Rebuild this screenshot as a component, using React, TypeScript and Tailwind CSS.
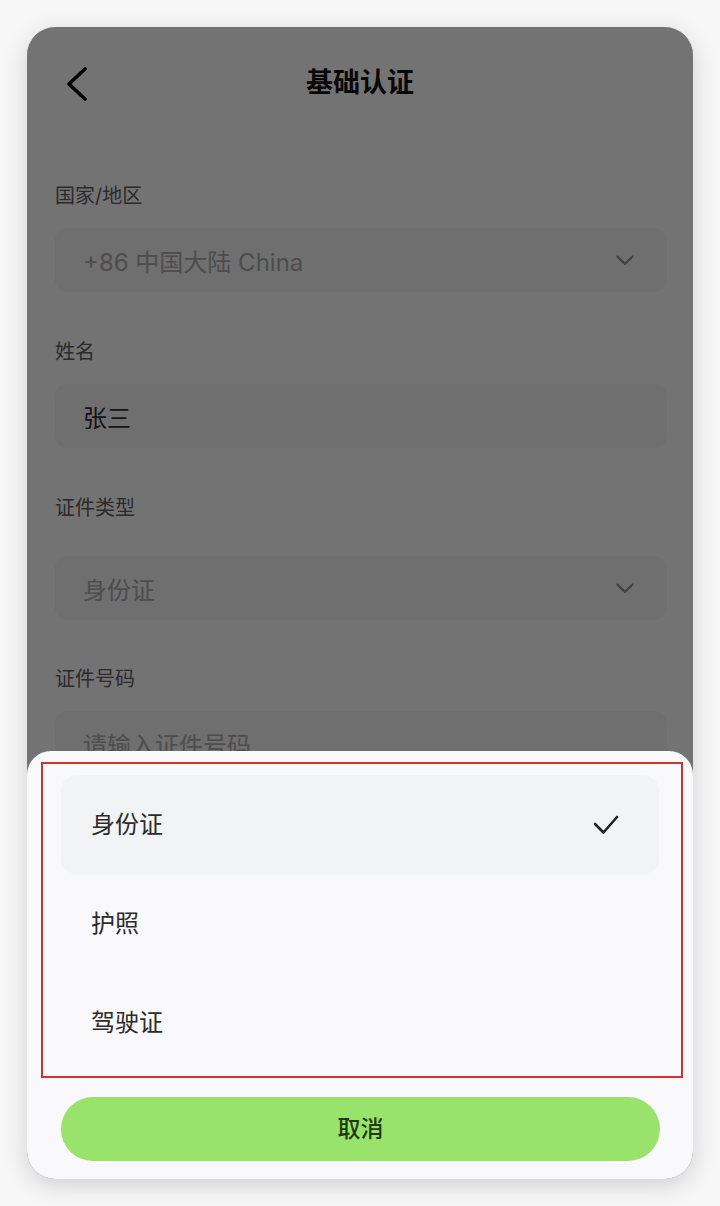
const font = { fontFamily: '"Inter", "Noto Sans CJK SC", sans-serif' };

interface FieldProps {
  label: string;
  value: string;
  filled?: boolean;
  select?: boolean;
  labelGap: string;
  inputGap: string;
}

function Field({ label, value, filled, select, labelGap, inputGap }: FieldProps) {
  return (
    <div>
      <div className={`${labelGap} text-[20px] leading-[26px] text-[#5f5f5f]`}>{label}</div>
      <div
        className={`${inputGap} mr-[-2px] flex h-[64px] items-center justify-between rounded-[12px] bg-[#f6f6f6] pl-[28px] pr-[33px]`}
      >
        <span className={`mt-[6px] text-[24px] ${filled ? "text-[#2f2f2f]" : "text-[#ababab]"}`}>{value}</span>
        {select && (
          <svg width="18" height="11" viewBox="0 0 18 11" fill="none" aria-hidden="true">
            <path d="M1.5 1.5 L9 9 L16.5 1.5" stroke="#8a8a8a" strokeWidth="2" strokeLinecap="round" strokeLinejoin="round" />
          </svg>
        )}
      </div>
    </div>
  );
}

const options = ["身份证", "护照", "驾驶证"];

export default function App() {
  return (
    <div className="min-h-[1206px] bg-[#f7f7f7] pl-[27px] pt-[27px]" style={font}>
      <div className="relative h-[1152px] w-[666px] overflow-hidden rounded-[28px] bg-white shadow-[0_6px_24px_rgba(0,0,0,0.16)]">
        {/* form underneath */}
        <div className="px-[28px]">
          <div className="relative flex h-[112px] items-center justify-center">
            <svg
              className="absolute left-[10px] top-[39px]"
              width="26"
              height="36"
              viewBox="0 0 26 36"
              fill="none"
              aria-hidden="true"
            >
              <path d="M20 3 L4 18 L20 33" stroke="#000" strokeWidth="3.6" strokeLinecap="round" strokeLinejoin="round" />
            </svg>
            <h1 className="text-[27px] font-bold text-[#111]">基础认证</h1>
          </div>

          <Field label="国家/地区" value="+86 中国大陆 China" select labelGap="mt-[44px]" inputGap="mt-[19px]" />
          <Field label="姓名" value="张三" filled labelGap="mt-[47px]" inputGap="mt-[19px]" />
          <Field label="证件类型" value="身份证" select labelGap="mt-[47px]" inputGap="mt-[35px]" />
          <Field label="证件号码" value="请输入证件号码" labelGap="mt-[46px]" inputGap="mt-[19px]" />
        </div>

        {/* dim overlay */}
        <div className="absolute inset-0 bg-black/55" />

        {/* action sheet */}
        <div className="absolute inset-x-0 bottom-0 h-[428px] rounded-t-[24px] bg-[#f9f9fb] pt-[11px]">
          <div className="ml-[14px] h-[316px] w-[642px] border-2 border-[#d22f2f] pl-[18px] pr-[22px] pt-[11px]">
            {options.map((opt, i) => (
              <div
                key={opt}
                className={`flex h-[99px] items-center justify-between rounded-[16px] pl-[30px] pr-[40px] ${
                  i === 0 ? "bg-[#f2f3f5]" : ""
                }`}
              >
                <span className="text-[24px] text-[#2b2b2b]">{opt}</span>
                {i === 0 && (
                  <svg width="26" height="22" viewBox="0 0 26 22" fill="none" aria-hidden="true">
                    <path d="M2 10 L10.5 18.5 L24 3" stroke="#222" strokeWidth="2.6" strokeLinecap="round" strokeLinejoin="round" />
                  </svg>
                )}
              </div>
            ))}
          </div>
          <button className="ml-[34px] mt-[19px] flex h-[64px] w-[599px] items-center justify-center rounded-full bg-[#99e26b] text-[23px] font-medium text-[#1f3a14]">
            取消
          </button>
        </div>
      </div>
    </div>
  );
}
